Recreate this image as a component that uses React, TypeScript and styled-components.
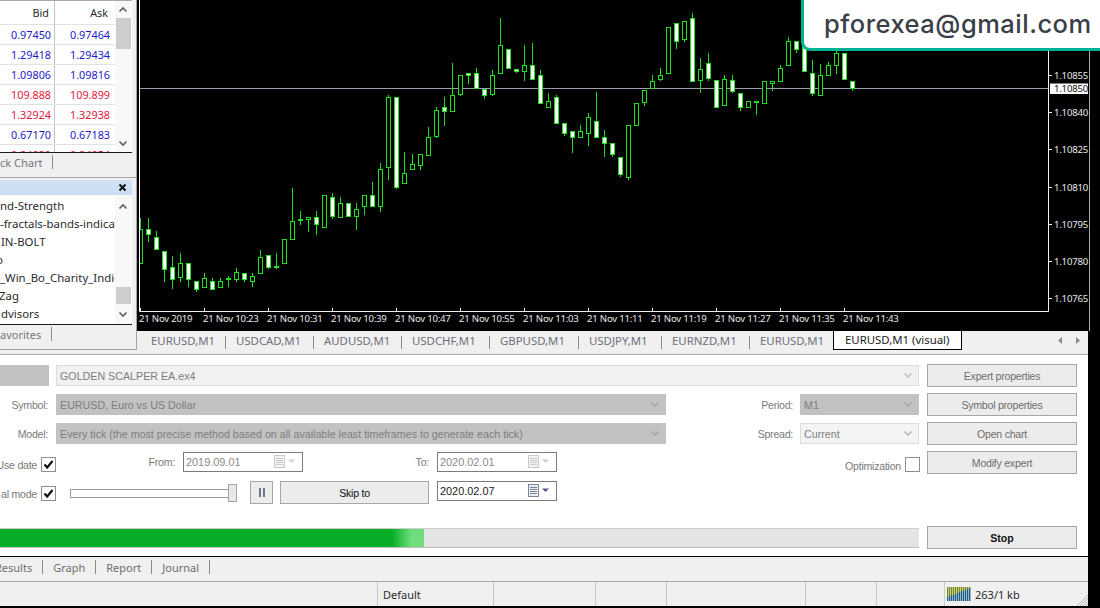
import React, { FC } from 'react'
import styled, { createGlobalStyle } from 'styled-components'

const GlobalStyle = createGlobalStyle`
  html, body {
    margin: 0;
    padding: 0;
    background: #000;
  }
  * {
    box-sizing: border-box;
  }
`

const FONT = '"Noto Sans", "Liberation Sans", sans-serif'
const FORM_FONT = '"Liberation Sans", Arial, sans-serif'

// [high, bodyTop, bodyBottom, low, filled], first candle at x=140, one every 8px
type Candle = [number, number, number, number, number]

const CANDLES: Candle[] = [
  [218, 229, 263, 263, 0], [218, 229, 234, 242, 1], [231, 237, 249, 249, 1], [251, 251, 269, 282, 1],
  [256, 267, 279, 289, 1], [253, 263, 277, 282, 0], [263, 263, 279, 287, 1], [281, 281, 289, 292, 1],
  [273, 278, 287, 287, 0], [278, 281, 289, 289, 1], [278, 281, 287, 287, 0], [276, 278, 279, 287, 0],
  [268, 272, 279, 282, 0], [273, 273, 279, 282, 1], [273, 276, 281, 287, 0], [250, 257, 273, 273, 0],
  [255, 255, 267, 269, 1], [253, 266, 267, 269, 0], [239, 239, 263, 263, 0], [188, 221, 239, 239, 0],
  [211, 219, 219, 225, 0], [217, 217, 219, 232, 0], [211, 217, 224, 235, 1], [195, 195, 227, 227, 0],
  [193, 197, 216, 219, 1], [197, 203, 217, 217, 0], [203, 203, 216, 216, 1], [203, 209, 216, 230, 0],
  [195, 195, 206, 215, 0], [182, 195, 206, 207, 1], [163, 169, 206, 212, 0], [95, 97, 167, 180, 0],
  [97, 97, 187, 189, 1], [152, 173, 183, 183, 0], [154, 164, 169, 169, 0], [154, 154, 165, 170, 0],
  [127, 137, 155, 155, 0], [107, 110, 136, 138, 0], [97, 107, 111, 126, 1], [63, 95, 111, 111, 0],
  [75, 75, 94, 96, 0], [73, 73, 75, 84, 1], [68, 73, 88, 88, 1], [89, 89, 95, 99, 1],
  [70, 75, 94, 96, 0], [18, 45, 73, 73, 0], [49, 49, 68, 68, 1], [69, 69, 71, 73, 1],
  [45, 65, 71, 81, 0], [43, 65, 79, 79, 1], [70, 75, 103, 103, 1], [93, 101, 107, 107, 0],
  [95, 97, 123, 123, 1], [123, 123, 133, 136, 1], [131, 131, 137, 153, 1], [125, 131, 137, 137, 0],
  [113, 117, 133, 146, 0], [92, 121, 137, 137, 1], [130, 137, 143, 157, 1], [143, 143, 154, 157, 1],
  [157, 157, 174, 177, 1], [125, 125, 177, 180, 0], [103, 103, 125, 125, 0], [90, 90, 102, 106, 0],
  [75, 81, 88, 88, 0], [68, 75, 79, 81, 0], [27, 27, 73, 73, 0], [23, 23, 41, 49, 1],
  [21, 21, 39, 42, 0], [13, 18, 81, 81, 1], [58, 69, 80, 93, 0], [53, 63, 78, 81, 1],
  [80, 80, 107, 107, 1], [75, 79, 105, 105, 0], [75, 80, 91, 93, 1], [93, 93, 107, 111, 1],
  [101, 101, 107, 107, 0], [101, 101, 102, 115, 0], [81, 81, 103, 103, 0], [81, 81, 83, 91, 0],
  [65, 68, 81, 81, 0], [37, 41, 65, 65, 0], [41, 41, 49, 53, 1], [43, 43, 71, 71, 1],
  [60, 73, 93, 96, 1], [64, 75, 95, 95, 0], [62, 65, 75, 75, 0], [40, 53, 65, 74, 0],
  [53, 53, 79, 79, 1], [81, 81, 88, 91, 1],
]

const PRICES: [string, number][] = [
  ['1.10855', 75],
  ['1.10840', 112],
  ['1.10825', 149],
  ['1.10810', 187],
  ['1.10795', 224],
  ['1.10780', 261],
  ['1.10765', 298],
]

const TIMES = [
  '21 Nov 2019', '21 Nov 10:23', '21 Nov 10:31', '21 Nov 10:39', '21 Nov 10:47', '21 Nov 10:55',
  '21 Nov 11:03', '21 Nov 11:11', '21 Nov 11:19', '21 Nov 11:27', '21 Nov 11:35', '21 Nov 11:43',
]

const QUOTES = [
  { bid: '0.97450', ask: '0.97464', down: false },
  { bid: '1.29418', ask: '1.29434', down: false },
  { bid: '1.09806', ask: '1.09816', down: false },
  { bid: '109.888', ask: '109.899', down: true },
  { bid: '1.32924', ask: '1.32938', down: true },
  { bid: '0.67170', ask: '0.67183', down: false },
  { bid: '0.84839', ask: '0.84854', down: true },
]

const NAV_ITEMS: [string, number][] = [
  ['nd-Strength', 0],
  ['-fractals-bands-indicators', 0],
  ['IN-BOLT', 1],
  ['o', -4],
  ['_Win_Bo_Charity_Indicator', 0],
  ['Zag', -1],
  ['dvisors', 1],
]

const CHART_TABS: [string, number][] = [
  ['EURUSD,M1', 151],
  ['USDCAD,M1', 236],
  ['AUDUSD,M1', 324],
  ['USDCHF,M1', 412],
  ['GBPUSD,M1', 500],
  ['USDJPY,M1', 589],
  ['EURNZD,M1', 672],
  ['EURUSD,M1', 760],
]

const Screen = styled.div`
  position: relative;
  width: 1100px;
  height: 608px;
  overflow: hidden;
  background: #000;
  font-family: ${FONT};
`

const Window = styled.div`
  display: flex;
  flex-direction: column;
  width: 1090px;
  height: 606px;
`

const TopArea = styled.div`
  display: flex;
  height: 351px;
  flex: none;
  background: #f0f0f0;
`

const Sidebar = styled.div`
  display: flex;
  flex-direction: column;
  width: 137px;
  height: 350px;
  flex: none;
  background: #f0f0f0;
  border-right: 1px solid #a3a3a3;
  border-bottom: 1px solid #a3a3a3;
`

const MarketWatch = styled.div`
  display: flex;
  height: 153px;
  flex: none;
  border-bottom: 1px solid #1a1a1a;
  margin-right: 4px;
  background: #fff;
  border-top: 1px solid #a8a8a8;
`

const QuoteTable = styled.div`
  width: 115px;
  overflow: hidden;
  flex: none;
`

const QuoteRow = styled.div<{ $header?: boolean; $down?: boolean }>`
  display: grid;
  grid-template-columns: 55px 60px;
  height: ${(p) => (p.$header ? '24px' : '20px')};
  line-height: ${(p) => (p.$header ? '24px' : '19px')};
  font-size: 10.8px;
  color: ${(p) => (p.$header ? '#2b2b2b' : p.$down ? '#e4173c' : '#1c1cc8')};
  border-bottom: 1px solid #e2e2e2;
`

const QuoteCell = styled.div<{ $pad: number }>`
  text-align: right;
  padding-right: ${(p) => p.$pad}px;
  &:first-child {
    border-right: 1px solid #c4c4c4;
  }
`

const ScrollTrack = styled.div`
  display: flex;
  flex-direction: column;
  align-items: center;
  width: 16px;
  flex: none;
  background: #f8f8f8;
`

const ScrollArrow = styled.div<{ $h: number }>`
  display: flex;
  align-items: center;
  justify-content: center;
  width: 100%;
  height: ${(p) => p.$h}px;
  flex: none;
`

const ScrollThumb = styled.div<{ $h: number }>`
  width: 15px;
  height: ${(p) => p.$h}px;
  flex: none;
  background: #cdcdcd;
`

const ScrollSpace = styled.div`
  flex: 1;
`

const PanelTabs = styled.div<{ $h: number }>`
  display: flex;
  align-items: center;
  gap: 10px;
  height: ${(p) => p.$h}px;
  flex: none;
  font-size: 11px;
  color: #77777f;
  background: #f0f0f0;
  padding-bottom: 6px;
  white-space: nowrap;
`

const TabSeparator = styled.span`
  display: inline-block;
  width: 1px;
  height: 14px;
  background: #8c8c8c;
`

const PanelRule = styled.div`
  height: 1px;
  flex: none;
  background: #a8a8a8;
`

const NavTitle = styled.div`
  display: flex;
  align-items: center;
  justify-content: flex-end;
  height: 15px;
  flex: none;
  margin: 2px 4px 0 0;
  padding-right: 5px;
  background: linear-gradient(#d4e3f5, #c9dcf3);
`

const NavBody = styled.div`
  display: flex;
  height: 130px;
  flex: none;
  margin-right: 4px;
  background: #fff;
  border-bottom: 1px solid #1a1a1a;
`

const NavList = styled.div`
  width: 115px;
  padding-top: 2px;
  overflow: hidden;
  flex: none;
`

const NavItem = styled.div<{ $indent: number }>`
  height: 18px;
  line-height: 18px;
  font-size: 11.4px;
  color: #2a2a2a;
  white-space: nowrap;
  margin-left: ${(p) => p.$indent}px;
`

const ChartColumn = styled.div`
  display: flex;
  flex-direction: column;
  flex: 1;
  min-width: 0;
  background: #000;
`

const ChartSvg = styled.svg`
  display: block;
  width: 953px;
  height: 331px;
  flex: none;
  background: #000;
`

const AxisText = styled.text<{ $dark?: boolean }>`
  font-family: ${FONT};
  font-size: 9.6px;
  letter-spacing: -0.22px;
  fill: ${(p) => (p.$dark ? '#111' : '#e8e8e8')};
`

const ChartTabBar = styled.div`
  position: relative;
  height: 20px;
  margin-right: 2px;
  background: #f0f0f0;
  font-size: 11.4px;
  color: #6f6f7a;
`

// tab x positions come from the terminal's own strip, so the strip is treated as a canvas
const ChartTab = styled.span<{ $x: number }>`
  position: absolute;
  top: 1px;
  left: ${(p) => p.$x - 137}px;
  line-height: 18px;
  white-space: nowrap;
`

const ChartTabRule = styled.span<{ $x: number }>`
  position: absolute;
  top: 5px;
  left: ${(p) => p.$x - 137}px;
  width: 1px;
  height: 13px;
  background: #8c8c8c;
`

const ActiveTab = styled.span`
  position: absolute;
  top: 0;
  left: 696px;
  width: 129px;
  height: 19px;
  line-height: 18px;
  padding-left: 11px;
  white-space: nowrap;
  color: #1a1a1a;
  background: #fff;
  border: 1px solid #000;
  border-top: none;
`

const TabArrows = styled.div`
  position: absolute;
  top: 6px;
  right: 8px;
  display: flex;
  gap: 14px;
`

const TabGap = styled.div`
  width: 1088px;
  height: 3px;
  flex: none;
  background: #f0f0f0;
`

const Tester = styled.div`
  display: flex;
  flex-direction: column;
  width: 1088px;
  height: 202px;
  flex: none;
  padding-top: 9px;
  gap: 6px;
  background: #fff;
  border-top: 1px solid #a8a8a8;
  font-family: ${FORM_FONT};
`

const FormRow = styled.div`
  display: flex;
  height: 23px;
  flex: none;
`

const FieldLabel = styled.div<{ $w: number; $ml?: number; $mt?: number }>`
  display: flex;
  justify-content: flex-end;
  width: ${(p) => p.$w}px;
  margin-left: ${(p) => p.$ml ?? 0}px;
  margin-top: ${(p) => p.$mt ?? 3}px;
  height: 18px;
  line-height: 18px;
  flex: none;
  font-size: 10.6px;
  letter-spacing: -0.25px;
  color: #7a7a7a;
  white-space: nowrap;
`

const SelectBox = styled.div<{ $w: number; $ml?: number; $kind: 'disabled' | 'light' | 'plain' }>`
  display: flex;
  align-items: center;
  justify-content: space-between;
  width: ${(p) => p.$w}px;
  height: 21px;
  margin: 1px 0 0 ${(p) => p.$ml ?? 0}px;
  padding: 0 5px 0 3px;
  flex: none;
  font-size: 10.7px;
  color: #7e7e7e;
  white-space: nowrap;
  overflow: hidden;
  background: ${(p) => (p.$kind === 'disabled' ? '#c2c2c2' : p.$kind === 'light' ? '#f1f1f1' : '#f4f4f4')};
  border: 1px solid ${(p) => (p.$kind === 'disabled' ? '#c2c2c2' : '#dcdcdc')};
`

const SideButton = styled.div<{ $strong?: boolean; $dark?: boolean; $w?: number; $ml?: number; $mt?: number }>`
  display: flex;
  align-items: center;
  justify-content: center;
  width: ${(p) => p.$w ?? 150}px;
  height: 23px;
  margin-left: ${(p) => p.$ml ?? 8}px;
  margin-top: ${(p) => p.$mt ?? 0}px;
  flex: none;
  font-size: 10.6px;
  letter-spacing: ${(p) => (p.$strong ? 0 : -0.25)}px;
  font-weight: ${(p) => (p.$strong ? 700 : 400)};
  color: ${(p) => (p.$strong || p.$dark ? '#111' : '#6c6c6c')};
  background: #ececec;
  border: 1px solid #a6a6a6;
`

const CheckBox = styled.div`
  display: flex;
  align-items: center;
  justify-content: center;
  width: 15px;
  height: 15px;
  margin-left: 4px;
  margin-top: 6px;
  flex: none;
  background: #fff;
  border: 1px solid #8e8e8e;
`

const DateInput = styled.div<{ $ml: number; $active?: boolean }>`
  display: flex;
  align-items: center;
  justify-content: space-between;
  width: 120px;
  height: 20px;
  margin-left: ${(p) => p.$ml}px;
  margin-top: 1px;
  padding: 0 4px 1px 2px;
  flex: none;
  font-size: 10.9px;
  color: ${(p) => (p.$active ? '#222' : '#8a8a8a')};
  background: #fff;
  border: 1px solid #7c7c7c;
`

const Slider = styled.div`
  display: flex;
  align-items: center;
  width: 167px;
  height: 18px;
  margin: 4px 0 0 14px;
  flex: none;
`

const SliderTrack = styled.div`
  flex: 1;
  height: 9px;
  background: #fff;
  border: 1px solid #9c9c9c;
`

const SliderThumb = styled.div`
  width: 9px;
  height: 18px;
  flex: none;
  margin-left: -1px;
  background: #e8e8e8;
  border: 1px solid #a6a6a6;
`

const PauseButton = styled.div`
  display: flex;
  align-items: center;
  justify-content: center;
  gap: 2px;
  width: 23px;
  height: 23px;
  margin: 1px 0 0 13px;
  flex: none;
  background: #ececec;
  border: 1px solid #a6a6a6;
`

const PauseBar = styled.span`
  width: 2px;
  height: 9px;
  background: #6c7a8c;
`

const ProgressRow = styled.div`
  display: flex;
  align-items: center;
  height: 23px;
  flex: none;
  margin-top: 17px;
`

const ProgressTrack = styled.div`
  width: 919px;
  height: 20px;
  flex: none;
  background: #e4e4e4;
  border-top: 1px solid #cfcfcf;
  border-bottom: 1px solid #bfbfbf;
`

const ProgressFill = styled.div<{ $w: number }>`
  width: ${(p) => p.$w}px;
  height: 100%;
  background: linear-gradient(90deg, #06ae28 0, #06ae28 392px, #6fdd7b 411px, #6fdd7b 100%);
`

const TesterTabs = styled.div`
  display: flex;
  align-items: flex-start;
  width: 1088px;
  height: 26px;
  flex: none;
  padding-top: 1px;
  font-size: 11px;
  color: #6e6e6e;
  background: #f0f0f0;
  border-top: 1px solid #000;
  border-bottom: 1px solid #a8a8a8;
`

const TesterTabItem = styled.div`
  display: flex;
  align-items: center;
  height: 18px;
  padding-right: 10px;
  white-space: nowrap;
  &::after {
    content: '';
    width: 1px;
    height: 14px;
    margin-left: 10px;
    background: #8c8c8c;
  }
`

const ResultsTab = styled(TesterTabItem)`
  margin-left: -5px;
`

const StatusBar = styled.div`
  display: flex;
  width: 1088px;
  flex: 1;
  font-size: 11px;
  color: #2b2b2b;
  background: #f0f0f0;
`

const StatusCell = styled.div<{ $w: number; $pad?: number; $last?: boolean }>`
  display: flex;
  align-items: center;
  gap: 4px;
  width: ${(p) => p.$w}px;
  height: 100%;
  flex: none;
  padding-left: ${(p) => p.$pad ?? 5}px;
  white-space: nowrap;
  border-right: ${(p) => (p.$last ? 'none' : '1px solid #c9c9c9')};
`

const GripCell = styled.div`
  display: flex;
  align-items: flex-end;
  justify-content: flex-end;
  flex: 1;
`

const EmailBadge = styled.div`
  position: absolute;
  top: -4px;
  left: 801px;
  width: 310px;
  height: 55px;
  padding: 9px 0 0 20px;
  font-family: Inter, "Open Sans", sans-serif;
  font-size: 25.5px;
  font-weight: 500;
  letter-spacing: 0.5px;
  line-height: 38px;
  color: #3a3f47;
  background: #fff;
  border-left: 3px solid #00b294;
  border-bottom: 3px solid #00b294;
  border-radius: 0 0 0 9px;
`

const Chevron: FC<{ dir: 'up' | 'down'; color?: string }> = ({ dir, color = '#5f5f5f' }) => (
  <svg width="10" height="7" viewBox="0 0 10 7">
    <path
      d={dir === 'up' ? 'M1.5 5.5 L5 2 L8.5 5.5' : 'M1.5 1.5 L5 5 L8.5 1.5'}
      fill="none"
      stroke={color}
      strokeWidth="1.7"
    />
  </svg>
)

const Tick: FC = () => (
  <svg width="11" height="11" viewBox="0 0 11 11">
    <path d="M1.5 5.5 L4.2 8.5 L9.5 2" fill="none" stroke="#111" strokeWidth="2.2" />
  </svg>
)

const Calendar: FC<{ active?: boolean }> = ({ active }) => {
  const line = active ? '#7d8698' : '#c9c9c9'
  return (
    <svg width="24" height="13" viewBox="0 0 24 13">
      <rect x="0.5" y="0.5" width="10" height="12" fill={active ? '#e8edf5' : '#f4f4f4'} stroke={line} />
      <path d="M2 3.5H9M2 5.5H9M2 7.5H9M2 9.5H9" stroke={line} strokeWidth="1" />
      <path d="M14 4.5H21L17.5 8Z" fill={active ? '#4e5a85' : '#d2d2d2'} />
    </svg>
  )
}

const CandleChart: FC = () => (
  <ChartSvg viewBox="137 0 953 331">
    <defs>
      <clipPath id="plot">
        <rect x="140" y="0" width="908" height="311" />
      </clipPath>
    </defs>
    <g clipPath="url(#plot)">
      <line x1="140" y1="88.5" x2="1048" y2="88.5" stroke="#9c9cae" />
      {CANDLES.map(([high, top, bottom, low, filled], i) => {
        const x = 140 + i * 8
        return (
          <g key={x}>
            <line x1={x + 0.5} y1={high} x2={x + 0.5} y2={low} stroke="#1ee01e" />
            <rect
              x={x - 1.5}
              y={top + 0.5}
              width={4}
              height={Math.max(bottom - top, 1)}
              fill={filled ? '#fff' : '#000'}
              stroke="#1ee01e"
            />
          </g>
        )
      })}
    </g>
    <path d="M139.5 0V311.5H1048.5V0" fill="none" stroke="#f2f2f2" />
    <line x1="1089.5" y1="0" x2="1089.5" y2="331" stroke="#a8a8a8" />
    {TIMES.map((label, i) => (
      <g key={label}>
        <line x1={140.5 + i * 64} y1="308" x2={140.5 + i * 64} y2="311" stroke="#f2f2f2" />
        <AxisText x={139 + i * 64} y="322">
          {label}
        </AxisText>
      </g>
    ))}
    {PRICES.map(([label, y]) => (
      <g key={label}>
        <line x1="1049" y1={y + 0.5} x2="1052" y2={y + 0.5} stroke="#f2f2f2" />
        <AxisText x="1054" y={y + 4}>
          {label}
        </AxisText>
      </g>
    ))}
    <rect x="1050" y="83.5" width="38" height="10.5" fill="#fff" />
    <AxisText $dark x="1054" y="92">
      1.10850
    </AxisText>
  </ChartSvg>
)

const ConnectionIcon: FC = () => (
  <svg width="24" height="14" viewBox="0 0 24 14">
    {Array.from({ length: 12 }, (_, i) => {
      const blue = 4 + Math.round(i * 0.8)
      return (
        <g key={i}>
          <rect x={i * 2} y="0" width="1.4" height={14 - blue} fill="#7c8a10" />
          <rect x={i * 2} y={14 - blue} width="1.4" height={blue} fill="#1b5c86" />
        </g>
      )
    })}
  </svg>
)

const SizeGrip: FC = () => (
  <svg width="12" height="12" viewBox="0 0 12 12">
    <path d="M12 1L1 12M12 4L4 12M12 7L7 12M12 10L10 12" stroke="#b4b4b4" strokeWidth="1" />
  </svg>
)

const App: FC = () => (
  <Screen>
    <GlobalStyle />
    <Window>
      <TopArea>
        <Sidebar>
          <MarketWatch>
            <QuoteTable>
              <QuoteRow $header>
                <QuoteCell $pad={5}>Bid</QuoteCell>
                <QuoteCell $pad={7}>Ask</QuoteCell>
              </QuoteRow>
              {QUOTES.map((quote) => (
                <QuoteRow key={quote.bid} $down={quote.down}>
                  <QuoteCell $pad={3}>{quote.bid}</QuoteCell>
                  <QuoteCell $pad={5}>{quote.ask}</QuoteCell>
                </QuoteRow>
              ))}
            </QuoteTable>
            <ScrollTrack>
              <ScrollArrow $h={17}>
                <Chevron dir="up" />
              </ScrollArrow>
              <ScrollThumb $h={31} />
              <ScrollSpace />
              <ScrollArrow $h={18}>
                <Chevron dir="down" />
              </ScrollArrow>
            </ScrollTrack>
          </MarketWatch>
          <PanelTabs $h={24}>
            <span>ck Chart</span>
            <TabSeparator />
          </PanelTabs>
          <PanelRule />
          <NavTitle>
            <svg width="9" height="9" viewBox="0 0 9 9">
              <path d="M1.5 1.5L7.5 7.5M7.5 1.5L1.5 7.5" stroke="#111" strokeWidth="2" />
            </svg>
          </NavTitle>
          <NavBody>
            <NavList>
              {NAV_ITEMS.map(([label, indent]) => (
                <NavItem key={label} $indent={indent}>
                  {label}
                </NavItem>
              ))}
            </NavList>
            <ScrollTrack>
              <ScrollArrow $h={22}>
                <Chevron dir="up" />
              </ScrollArrow>
              <ScrollSpace />
              <ScrollThumb $h={17} />
              <ScrollArrow $h={20}>
                <Chevron dir="down" />
              </ScrollArrow>
            </ScrollTrack>
          </NavBody>
          <PanelTabs $h={24}>
            <span>avorites</span>
            <TabSeparator />
          </PanelTabs>
        </Sidebar>
        <ChartColumn>
          <CandleChart />
          <ChartTabBar>
            {CHART_TABS.map(([label, x]) => (
              <React.Fragment key={x}>
                <ChartTab $x={x}>{label}</ChartTab>
                {x > 151 && <ChartTabRule $x={x - 11} />}
              </React.Fragment>
            ))}
            <ActiveTab>EURUSD,M1 (visual)</ActiveTab>
            <TabArrows>
              <svg width="4" height="7" viewBox="0 0 4 7">
                <path d="M4 0V7L0 3.5Z" fill="#8a8a8a" />
              </svg>
              <svg width="4" height="7" viewBox="0 0 4 7">
                <path d="M0 0V7L4 3.5Z" fill="#8a8a8a" />
              </svg>
            </TabArrows>
          </ChartTabBar>
        </ChartColumn>
      </TopArea>
      <TabGap />
      <Tester>
        <FormRow>
          <SelectBox $w={49} $kind="disabled" />
          <SelectBox $w={863} $ml={7} $kind="light">
            GOLDEN SCALPER EA.ex4
            <Chevron dir="down" color="#c4c4c4" />
          </SelectBox>
          <SideButton>Expert properties</SideButton>
        </FormRow>
        <FormRow>
          <FieldLabel $w={48}>Symbol:</FieldLabel>
          <SelectBox $w={610} $ml={8} $kind="disabled">
            EURUSD, Euro vs US Dollar
            <Chevron dir="down" color="#a8a8a8" />
          </SelectBox>
          <FieldLabel $w={127}>Period:</FieldLabel>
          <SelectBox $w={119} $ml={7} $kind="disabled">
            M1
            <Chevron dir="down" color="#a8a8a8" />
          </SelectBox>
          <SideButton>Symbol properties</SideButton>
        </FormRow>
        <FormRow>
          <FieldLabel $w={48}>Model:</FieldLabel>
          <SelectBox $w={610} $ml={8} $kind="disabled">
            Every tick (the most precise method based on all available least timeframes to generate each tick)
            <Chevron dir="down" color="#a8a8a8" />
          </SelectBox>
          <FieldLabel $w={127}>Spread:</FieldLabel>
          <SelectBox $w={119} $ml={7} $kind="plain">
            Current
            <Chevron dir="down" color="#b8b8b8" />
          </SelectBox>
          <SideButton>Open chart</SideButton>
        </FormRow>
        <FormRow>
          <FieldLabel $w={37} $mt={5}>
            Use date
          </FieldLabel>
          <CheckBox>
            <Tick />
          </CheckBox>
          <FieldLabel $w={25} $ml={94} $mt={2}>
            From:
          </FieldLabel>
          <DateInput $ml={8}>
            2019.09.01
            <Calendar />
          </DateInput>
          <FieldLabel $w={126} $mt={2}>
            To:
          </FieldLabel>
          <DateInput $ml={8}>
            2020.02.01
            <Calendar />
          </DateInput>
          <FieldLabel $w={344} $mt={6}>
            Optimization
          </FieldLabel>
          <CheckBox />
          <SideButton $ml={7}>Modify expert</SideButton>
        </FormRow>
        <FormRow>
          <FieldLabel $w={37} $mt={5}>
            al mode
          </FieldLabel>
          <CheckBox>
            <Tick />
          </CheckBox>
          <Slider>
            <SliderTrack />
            <SliderThumb />
          </Slider>
          <PauseButton>
            <PauseBar />
            <PauseBar />
          </PauseButton>
          <SideButton $dark $w={149} $ml={7} $mt={1}>
            Skip to
          </SideButton>
          <DateInput $ml={8} $active>
            2020.02.07
            <Calendar active />
          </DateInput>
        </FormRow>
        <ProgressRow>
          <ProgressTrack>
            <ProgressFill $w={424} />
          </ProgressTrack>
          <SideButton $strong>Stop</SideButton>
        </ProgressRow>
      </Tester>
      <TesterTabs>
        <ResultsTab>Results</ResultsTab>
        <TesterTabItem>Graph</TesterTabItem>
        <TesterTabItem>Report</TesterTabItem>
        <TesterTabItem>Journal</TesterTabItem>
      </TesterTabs>
      <StatusBar>
        <StatusCell $w={378} />
        <StatusCell $w={116}>Default</StatusCell>
        <StatusCell $w={102} />
        <StatusCell $w={71} />
        <StatusCell $w={139} />
        <StatusCell $w={71} />
        <StatusCell $w={68} />
        <StatusCell $w={125} $pad={2} $last>
          <ConnectionIcon />
          263/1 kb
        </StatusCell>
        <GripCell>
          <SizeGrip />
        </GripCell>
      </StatusBar>
    </Window>
    <EmailBadge>pforexea@gmail.com</EmailBadge>
  </Screen>
)

export default App
